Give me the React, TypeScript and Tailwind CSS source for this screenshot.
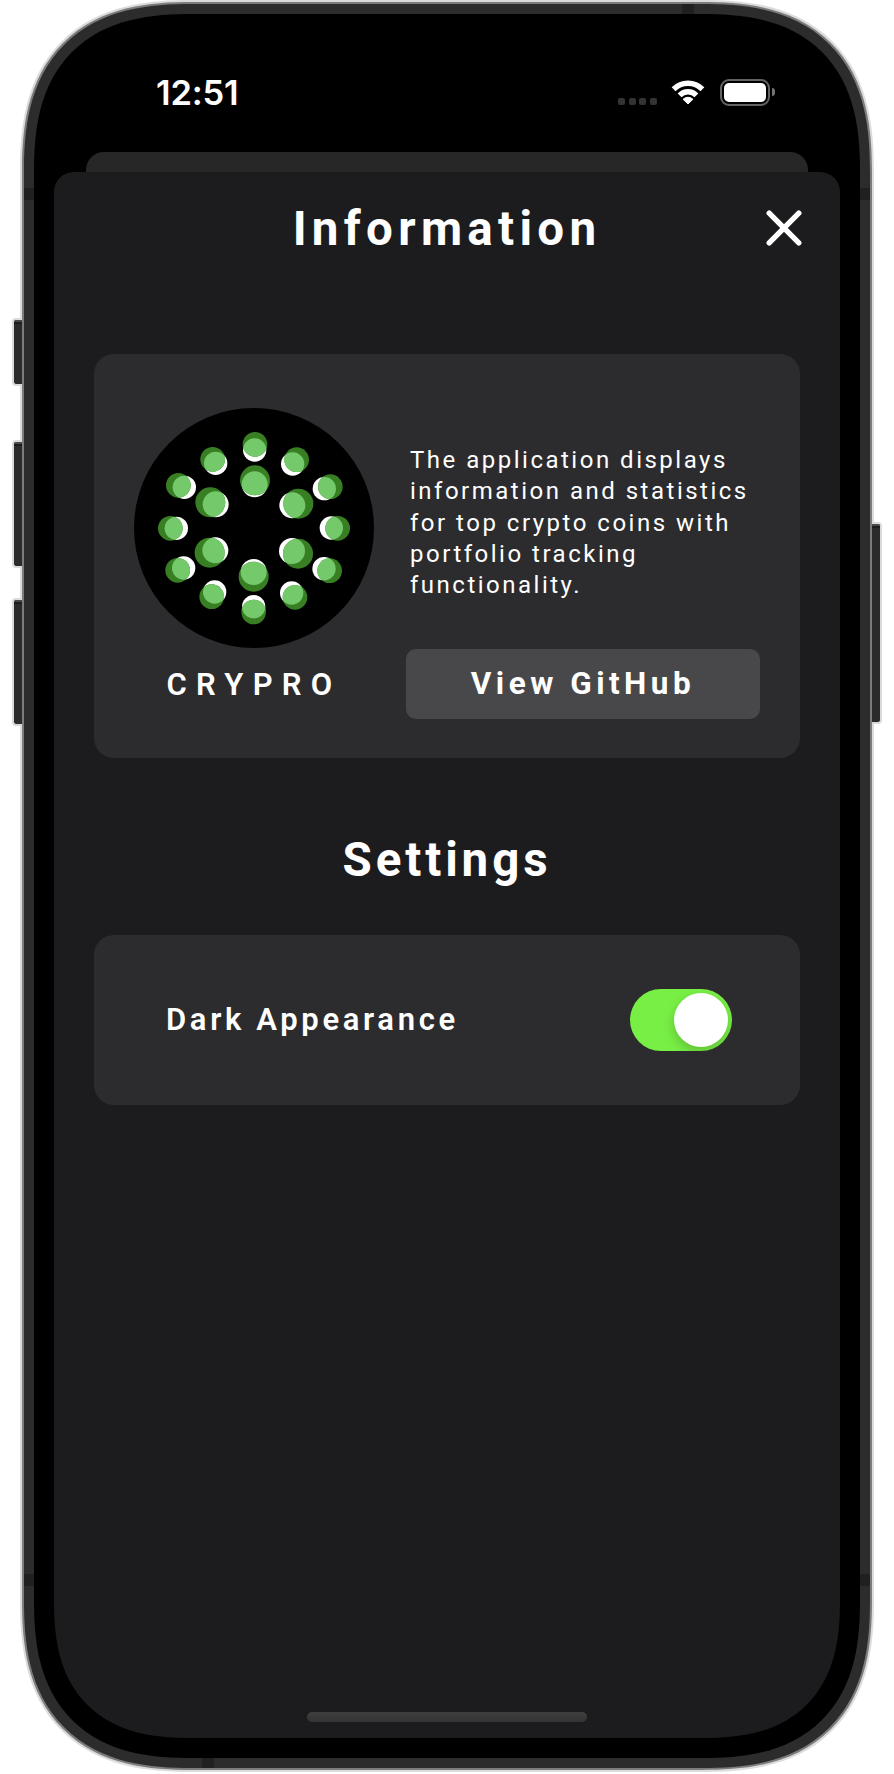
import type { ReactNode } from "react";

type Dot = { white: [number, number]; green: [number, number]; big?: boolean };

const dots: Dot[] = [
  { green: [495, 282], white: [494, 299] },
  { green: [620, 328], white: [608, 341] },
  { green: [721, 409], white: [703, 415] },
  { green: [743, 534], white: [724, 533] },
  { green: [719, 661], white: [702, 655] },
  { green: [615, 741], white: [605, 728] },
  { green: [491, 785], white: [491, 769] },
  { green: [365, 739], white: [374, 725] },
  { green: [263, 660], white: [281, 653] },
  { green: [241, 534], white: [259, 534] },
  { green: [265, 405], white: [283, 411] },
  { green: [368, 327], white: [377, 339] },
  { green: [495, 390], white: [494, 402], big: true },
  { green: [625, 460], white: [607, 465], big: true },
  { green: [624, 610], white: [606, 602], big: true },
  { green: [491, 679], white: [491, 665], big: true },
  { green: [359, 607], white: [376, 600], big: true },
  { green: [361, 456], white: [377, 462], big: true },
];

// Each dot is a white disc and a dark green one; their overlap is light green.
function Logo() {
  return (
    <svg viewBox="132 173 720 720" className="size-[240px] shrink-0">
      <circle cx="492" cy="533" r="360" fill="#000" />
      {dots.map(({ white, green, big }, i) => {
        const rg = big ? 45 : 37;
        const rw = big ? 39 : 35;
        return (
          <g key={i}>
            <clipPath id={`dot-${i}`}>
              <circle cx={green[0]} cy={green[1]} r={rg} />
            </clipPath>
            <circle cx={white[0]} cy={white[1]} r={rw} fill="#fff" />
            <circle cx={green[0]} cy={green[1]} r={rg} fill="#387f24" />
            <circle cx={white[0]} cy={white[1]} r={rw} fill="#74c96b" clipPath={`url(#dot-${i})`} />
          </g>
        );
      })}
    </svg>
  );
}

function Wifi() {
  return (
    <svg viewBox="0 0 102 76" className="h-[25px] w-[34px]" fill="none" stroke="#fff" strokeWidth="16.5">
      <path d="M7.2 28.2A62 62 0 0 1 94.8 28.2" />
      <path d="M25.5 46.5A36 36 0 0 1 76.5 46.5" />
      <path d="M51 73 36 58.5A21.5 21.5 0 0 1 66 58.5Z" fill="#fff" strokeWidth="3" strokeLinejoin="round" />
    </svg>
  );
}

function Battery() {
  return (
    <div className="flex items-center gap-[2px]">
      <div className="h-[27px] w-[50px] rounded-[9px] border-2 border-[#636363] p-[2px]">
        <div className="h-full w-full rounded-[5px] bg-white" />
      </div>
      <div className="h-[8px] w-[3px] rounded-r-full bg-[#737373]" />
    </div>
  );
}

function StatusBar() {
  return (
    <div className="mt-[60px] mb-[42px] flex h-9 items-center justify-between pr-[65px] pl-[102px]">
      <span className="pt-px font-['Inter',sans-serif] text-[34.5px] leading-9 font-semibold tracking-[-0.2px]">
        12:51
      </span>
      <div className="flex h-full items-center">
        <div className="mr-[14px] mb-[5px] flex gap-[3.67px] self-end">
          {[0, 1, 2, 3].map((i) => (
            <span key={i} className="size-[7px] rounded-[2px] bg-[#333]" />
          ))}
        </div>
        <Wifi />
        <div className="ml-[15px]">
          <Battery />
        </div>
      </div>
    </div>
  );
}

function SideButton({ className }: { className: string }) {
  return (
    <div className={`absolute z-10 w-[10px] overflow-hidden border-2 border-[#dadada] bg-[#2b2b2b] ${className}`}>
      <div className="h-[2px] bg-[#4a4a4c]" />
      <div className="h-[2px] bg-[#1d1d1d]" />
    </div>
  );
}

function Card({ className, children }: { className: string; children: ReactNode }) {
  return <section className={`rounded-[20px] bg-[#2c2c2e] ${className}`}>{children}</section>;
}

function InfoSheet() {
  return (
    <main className="flex h-[1566px] flex-col rounded-t-[20px] rounded-b-[138px] bg-[#1c1c1e] px-10 pt-7 pb-4 [corner-shape:round_round_superellipse(1.33)_superellipse(1.33)]">
      <header className="-mr-[2px] -ml-[2px] grid grid-cols-[1fr_auto_1fr] items-center">
        <h1 className="col-start-2 pt-[2px] text-[47.5px] leading-[54px] font-bold tracking-[5.3px]">Information</h1>
        <button aria-label="Close" className="justify-self-end">
          <svg viewBox="0 0 36 36" className="size-9" stroke="#fff" strokeWidth="5.4" strokeLinecap="round">
            <path d="M3.2 3.2 32.8 32.8M32.8 3.2 3.2 32.8" />
          </svg>
        </button>
      </header>

      <Card className="mt-[98px] flex h-[404px] justify-between px-10 pt-[54px] pb-[39px]">
        <div className="flex w-[240px] flex-col items-center">
          <Logo />
          <p className="text-[31px] leading-[73px] font-semibold tracking-[9.3px]">CRYPRO</p>
        </div>
        <div className="flex w-[354px] flex-col justify-between">
          <p className="pt-[37px] pl-[4px] text-[24px] leading-[31.33px] tracking-[2.5px] whitespace-nowrap">
            The application displays
            <br />
            information and statistics
            <br />
            for top crypto coins with
            <br />
            portfolio tracking
            <br />
            functionality.
          </p>
          <button className="h-[70px] rounded-[10px] bg-[#48484a] text-[31.5px] font-bold tracking-[4.5px]">
            View GitHub
          </button>
        </div>
      </Card>

      <h2 className="mt-[73px] pt-[2px] text-center text-[47.5px] leading-[54px] font-bold tracking-[3.9px]">Settings</h2>

      <Card className="mt-12 flex h-[170px] items-center justify-between pr-[68px] pl-[72px]">
        <span className="pt-px text-[31px] font-semibold tracking-[3.65px]">Dark Appearance</span>
        <button
          role="switch"
          aria-checked="true"
          aria-label="Dark Appearance"
          className="flex h-[62px] w-[102px] items-center justify-end overflow-hidden rounded-full bg-[#78ef45] pr-1"
        >
          <span className="size-[54px] rounded-full bg-white shadow-[0_5px_12px_rgba(0,0,0,0.2)]" />
        </button>
      </Card>

      <div className="mt-auto h-[10px] w-[280px] self-center rounded-full bg-linear-to-b from-[#3e3e3e] to-[#343434]" />
    </main>
  );
}

export default function App() {
  return (
    <div className="relative h-[1774px] w-[894px] overflow-hidden bg-white pl-5 font-['Roboto',sans-serif] text-white">
      <SideButton className="top-[318px] left-[12px] h-[68px] rounded-l-[4px] border-r-0" />
      <SideButton className="top-[440px] left-[12px] h-[128px] rounded-l-[4px] border-r-0" />
      <SideButton className="top-[598px] left-[12px] h-[128px] rounded-l-[4px] border-r-0" />
      <SideButton className="top-[522px] left-[872px] h-[202px] rounded-r-[4px] border-l-0" />

      <div className="relative h-[1772px] w-[854px] rounded-[172px] bg-[#d8d8d8]/90 p-[2px] [corner-shape:superellipse(1.33)]">
        <div className="h-full rounded-[170px] bg-[#7c7c7c] p-[2px] [corner-shape:superellipse(1.33)]">
          <div className="h-full rounded-[168px] bg-[#2c2c2c] p-[10px] [corner-shape:superellipse(1.33)]">
            <div className="flex h-full flex-col rounded-[158px] bg-black px-5 [corner-shape:superellipse(1.33)]">
              <StatusBar />
              <div className="mx-8 h-5 rounded-t-[18px] bg-[#272727]" />
              <InfoSheet />
            </div>
          </div>
        </div>
        <span className="absolute top-[188px] left-[4px] h-3 w-[10px] bg-[#202020]" />
        <span className="absolute top-[188px] right-[4px] h-3 w-[10px] bg-[#202020]" />
        <span className="absolute top-[1574px] left-[4px] h-3 w-[10px] bg-[#202020]" />
        <span className="absolute top-[1574px] right-[4px] h-3 w-[10px] bg-[#202020]" />
        <span className="absolute top-[4px] left-[662px] h-[10px] w-3 bg-[#202020]" />
        <span className="absolute bottom-[4px] left-[182px] h-[10px] w-3 bg-[#202020]" />
      </div>
    </div>
  );
}
